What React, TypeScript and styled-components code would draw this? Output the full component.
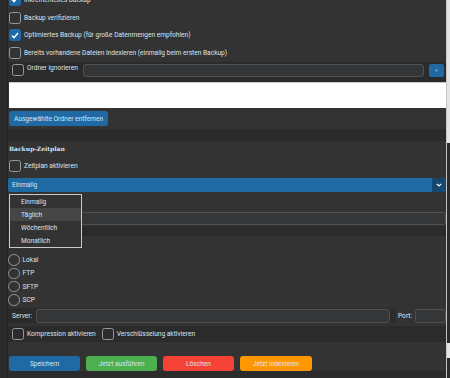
import * as React from 'react'
import styled, { createGlobalStyle } from 'styled-components'

const GlobalStyle = createGlobalStyle`
  html, body {
    margin: 0;
    padding: 0;
    background: #2b2b2b;
  }
  * {
    box-sizing: border-box;
  }
`

const BLUE = '#1f6aa5'
const TEXT = '#dce4ee'

const Screen = styled.div`
  display: flex;
  width: 450px;
  height: 378px;
  overflow: hidden;
  background: #2b2b2b;
  font-family: Roboto, 'Liberation Sans', sans-serif;
  font-size: 6.6px;
  color: ${TEXT};
`
const Gutter = styled.div`
  width: 8px;
  flex: none;
  border-right: 1px solid #202020;
`
const Main = styled.div`
  flex: 1;
  display: flex;
  flex-direction: column;
  overflow: hidden;
`
const Scrollbar = styled.div`
  width: 4px;
  flex: none;
  display: flex;
  flex-direction: column;
  border-left: 1px solid #c4c4c4;
`
const ScrollPart = styled.div<{ $h: number; $light?: boolean }>`
  height: ${p => p.$h}px;
  flex: none;
  background: ${p => (p.$light ? '#e6e6e6' : '#2b2b2b')};
`

const Frame = styled.div<{ $pad?: string }>`
  background: #333333;
  padding: ${p => p.$pad || '0'};
  display: flex;
  flex-direction: column;
`
const Separator = styled.div<{ $h: number }>`
  height: ${p => p.$h}px;
  flex: none;
  background: #2b2b2b;
`

const Row = styled.div<{ $h: number; $pl?: number; $dark?: boolean }>`
  height: ${p => p.$h}px;
  flex: none;
  display: flex;
  align-items: center;
  padding-left: ${p => p.$pl ?? 1}px;
  background: ${p => (p.$dark ? '#2b2b2b' : 'transparent')};
`

const Box = styled.span<{ $checked?: boolean }>`
  width: 12px;
  height: 12px;
  flex: none;
  border-radius: 2.5px;
  border: 1.5px solid ${p => (p.$checked ? BLUE : '#949a9f')};
  background: ${p => (p.$checked ? BLUE : 'transparent')};
  display: flex;
  align-items: center;
  justify-content: center;
  margin-right: 3px;
`
const Label = styled.span<{ $mr?: number }>`
  white-space: nowrap;
  margin-right: ${p => p.$mr ?? 0}px;
`

const Check: React.FC<{ checked?: boolean; label: string; mr?: number }> = ({ checked, label, mr }) => (
  <>
    <Box $checked={checked}>
      {checked && (
        <svg width="8" height="7" viewBox="0 0 8 7">
          <path d="M1 3.6 L3 5.6 L7 1" fill="none" stroke="#fff" strokeWidth="1.4" />
        </svg>
      )}
    </Box>
    <Label $mr={mr}>{label}</Label>
  </>
)

const Input = styled.div<{ $w?: number }>`
  height: 13.5px;
  ${p => (p.$w ? `width: ${p.$w}px; flex: none;` : 'flex: 1;')}
  background: #343638;
  border: 1px solid #4e5255;
  border-radius: 3px;
`
const PlusButton = styled.div`
  width: 15px;
  height: 13.5px;
  flex: none;
  margin-left: 5px;
  background: ${BLUE};
  border-radius: 2px;
  display: flex;
  align-items: center;
  justify-content: center;
  color: #9bb8d3;
  font-size: 6px;
  line-height: 1;
`
const TextArea = styled.div`
  height: 26px;
  flex: none;
  background: #ffffff;
  border-top: 1px solid #c8c8c8;
  margin-left: 1px;
`
const Button = styled.div<{ $bg: string; $w?: number }>`
  height: 14.5px;
  width: ${p => (p.$w ? `${p.$w}px` : 'auto')};
  padding: 0 5px;
  flex: none;
  background: ${p => p.$bg};
  border-radius: 3px;
  display: flex;
  align-items: center;
  justify-content: center;
  color: ${TEXT};
  white-space: nowrap;
`
const Title = styled.div`
  height: 14px;
  display: flex;
  align-items: center;
  padding-left: 1px;
  font-weight: bold;
  font-family: 'DejaVu Serif', 'Liberation Serif', serif;
  font-size: 6px;
`
const SelectWrap = styled.div`
  position: relative;
  margin-top: 1px;
  height: 14px;
  display: flex;
  background: ${BLUE};
  border-radius: 2px;
`
const SelectValue = styled.div`
  flex: 1;
  display: flex;
  align-items: center;
  padding-left: 4px;
`
const SelectArrow = styled.div`
  width: 14px;
  background: #144870;
  border-radius: 0 2px 2px 0;
  display: flex;
  align-items: center;
  justify-content: center;
`
const Menu = styled.div`
  position: absolute;
  left: 1px;
  top: 16px;
  width: 73px;
  background: #333333;
  border: 1px solid #c9c9c9;
  z-index: 2;
`
const MenuItem = styled.div<{ $active?: boolean }>`
  height: 13px;
  display: flex;
  align-items: center;
  padding-left: 11px;
  background: ${p => (p.$active ? '#464646' : 'transparent')};
`
const Radio = styled.span`
  width: 11.5px;
  height: 11.5px;
  flex: none;
  border-radius: 50%;
  border: 1.5px solid #949a9f;
  margin-right: 3px;
`
const ServerBox = styled.div`
  display: flex;
  align-items: center;
  flex: none;
  width: 388px;
  height: 15px;
  background: #2b2b2b;
  padding-left: 4px;
  padding-right: 6px;
  gap: 4px;
`
const ButtonBar = styled.div`
  display: flex;
  gap: 6px;
  padding-left: 1px;
  margin-top: 14px;
`

const App: React.FC = () => {
  return (
    <Screen>
      <GlobalStyle />
      <Gutter />
      <Main>
        <Frame style={{ marginTop: -9 }}>
          <Row $h={17.8}>
            <Check checked label="Inkrementelles Backup" />
          </Row>
          <Row $h={17.8}>
            <Check label="Backup verifizieren" />
          </Row>
          <Row $h={17.8}>
            <Check checked label="Optimiertes Backup (für große Datenmengen empfohlen)" />
          </Row>
          <Row $h={17.8}>
            <Check label="Bereits vorhandene Dateien indexieren (einmalig beim ersten Backup)" />
          </Row>
          <Row $h={20} $pl={4} $dark style={{ alignItems: 'flex-start', paddingTop: 1.5, paddingRight: 2 }}>
            <Check label="Ordner ignorieren" mr={5} />
            <Input />
            <PlusButton>+</PlusButton>
          </Row>
          <TextArea />
          <Row $h={21}>
            <Button $bg={BLUE}>Ausgewählte Ordner entfernen</Button>
          </Row>
        </Frame>
        <Separator $h={12} />
        <Frame>
          <Title>Backup-Zeitplan</Title>
          <Row $h={22}>
            <Check label="Zeitplan aktivieren" />
          </Row>
          <SelectWrap>
            <SelectValue>Einmalig</SelectValue>
            <SelectArrow>
              <svg width="6" height="4" viewBox="0 0 6 4">
                <path d="M0.8 0.8 L3 3 L5.2 0.8" fill="none" stroke="#fff" strokeWidth="1.2" />
              </svg>
            </SelectArrow>
            <Menu>
              <MenuItem>Einmalig</MenuItem>
              <MenuItem $active>Täglich</MenuItem>
              <MenuItem>Wöchentlich</MenuItem>
              <MenuItem>Monatlich</MenuItem>
            </Menu>
          </SelectWrap>
          <Row $h={34} style={{ alignItems: 'flex-end', paddingBottom: 1 }}>
            <Input />
          </Row>
        </Frame>
        <Separator $h={10} />
        <Frame $pad="17px 0 0 0">
          {['Lokal', 'FTP', 'SFTP', 'SCP'].map(t => (
            <Row key={t} $h={13.4} $pl={0}>
              <Radio />
              <Label>{t}</Label>
            </Row>
          ))}
          <Row $h={15} $pl={0} style={{ marginTop: 1.5 }}>
            <ServerBox>
              <Label>Server:</Label>
              <Input />
            </ServerBox>
            <Label $mr={3} style={{ marginLeft: 2 }}>Port:</Label>
            <Input $w={31} />
          </Row>
          <Row $h={16} $pl={4} $dark style={{ marginTop: 3 }}>
            <Check label="Kompression aktivieren" mr={6} />
            <Check label="Verschlüsselung aktivieren" />
          </Row>
          <ButtonBar>
            <Button $bg={BLUE} $w={71}>Speichern</Button>
            <Button $bg="#4caf50" $w={71}>Jetzt ausführen</Button>
            <Button $bg="#f44336" $w={71}>Löschen</Button>
            <Button $bg="#ff9800" $w={72}>Jetzt indexieren</Button>
          </ButtonBar>
          <div style={{ height: 0.5 }} />
        </Frame>
      </Main>
      <Scrollbar>
        <ScrollPart $h={143} $light />
        <ScrollPart $h={200} />
        <ScrollPart $h={15} $light />
        <ScrollPart $h={20} />
      </Scrollbar>
    </Screen>
  )
}

export default App
